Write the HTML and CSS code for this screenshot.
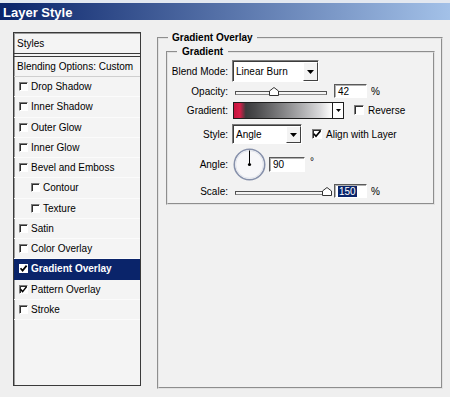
FILE: index.html
```html
<!DOCTYPE html>
<html>
<head>
<meta charset="utf-8">
<title>Layer Style</title>
<link rel="stylesheet" href="styles.css">
</head>
<body>
<div class="window">
  <div class="titlebar">Layer Style</div>
  <div class="main">
    <div class="stylelist">
      <div class="row head">Styles</div>
      <div class="row blend">Blending Options: Custom</div>
      <div class="row"><span class="cb"></span>Drop Shadow</div>
      <div class="row"><span class="cb"></span>Inner Shadow</div>
      <div class="row"><span class="cb"></span>Outer Glow</div>
      <div class="row"><span class="cb"></span>Inner Glow</div>
      <div class="row"><span class="cb"></span>Bevel and Emboss</div>
      <div class="row sub"><span class="cb"></span>Contour</div>
      <div class="row sub"><span class="cb"></span>Texture</div>
      <div class="row"><span class="cb"></span>Satin</div>
      <div class="row"><span class="cb"></span>Color Overlay</div>
      <div class="row sel"><span class="cb on"><svg viewBox="0 0 9 9" width="9" height="9"><path d="M1.5 4.2 L3.6 6.6 L7.6 1.6" fill="none" stroke="#000" stroke-width="1.7"/></svg></span>Gradient Overlay</div>
      <div class="row"><span class="cb on"><svg viewBox="0 0 9 9" width="9" height="9"><path d="M1.5 4.2 L3.6 6.6 L7.6 1.6" fill="none" stroke="#000" stroke-width="1.5"/></svg></span>Pattern Overlay</div>
      <div class="row"><span class="cb"></span>Stroke</div>
    </div>

    <fieldset class="group outer">
      <legend>Gradient Overlay</legend>
      <fieldset class="group inner">
        <legend>Gradient</legend>
        <div class="form">
          <div class="lbl">Blend Mode:</div>
          <div class="ctl">
            <div class="select blendsel"><span class="val">Linear Burn</span><span class="btn"><svg width="7" height="4" viewBox="0 0 7 4"><path d="M0 0 H7 L3.5 4 Z" fill="#000"/></svg></span></div>
          </div>

          <div class="lbl">Opacity:</div>
          <div class="ctl">
            <div class="slider"><div class="track"></div><svg class="thumb" style="left:42%" width="10" height="9" viewBox="0 0 10 9"><path d="M0.5 8.5 V4 L5 0.5 L9.5 4 V8.5 Z" fill="#fff" stroke="#333"/></svg></div>
            <div class="num">42</div>
            <span class="unit">%</span>
          </div>

          <div class="lbl">Gradient:</div>
          <div class="ctl">
            <div class="gradbox"><div class="swatch"></div><div class="gbtn"><svg width="5" height="3" viewBox="0 0 5 3"><path d="M0 0 H5 L2.5 3 Z" fill="#000"/></svg></div></div>
            <span class="cb r"></span><span class="cbl">Reverse</span>
          </div>

          <div class="lbl">Style:</div>
          <div class="ctl">
            <div class="select stylesel"><span class="val">Angle</span><span class="btn"><svg width="7" height="4" viewBox="0 0 7 4"><path d="M0 0 H7 L3.5 4 Z" fill="#000"/></svg></span></div>
            <span class="cb r on"><svg viewBox="0 0 10 10" width="10" height="10"><path d="M1.8 4.8 L4 7.2 L8.4 2" fill="none" stroke="#000" stroke-width="1.7"/></svg></span><span class="cbl">Align with Layer</span>
          </div>

          <div class="lbl">Angle:</div>
          <div class="ctl">
            <svg class="dial" width="33" height="33" viewBox="0 0 33 33">
              <circle cx="16.5" cy="16.5" r="15.2" fill="#f7f7f9" stroke="#8791ab" stroke-width="1.6"/>
              <circle cx="16.5" cy="16.5" r="13.8" fill="none" stroke="#e2e5ec" stroke-width="1"/>
              <line x1="16.5" y1="16.5" x2="16.5" y2="2.5" stroke="#000" stroke-width="1"/>
              <circle cx="16.5" cy="16.5" r="1.6" fill="#000"/>
            </svg>
            <div class="num angle">90</div>
            <span class="deg">°</span>
          </div>

          <div class="lbl">Scale:</div>
          <div class="ctl">
            <div class="slider"><div class="track"></div><svg class="thumb" style="left:100%" width="10" height="9" viewBox="0 0 10 9"><path d="M0.5 8.5 V4 L5 0.5 L9.5 4 V8.5 Z" fill="#fff" stroke="#333"/></svg></div>
            <div class="num"><span class="hl">150</span></div>
            <span class="unit">%</span>
          </div>
        </div>
      </fieldset>
    </fieldset>
  </div>
</div>
</body>
</html>
```

FILE: styles.css
```css
html, body {
  margin: 0;
  padding: 0;
}
body {
  width: 450px;
  height: 397px;
  overflow: hidden;
  background: #efefef;
  font-family: "Liberation Sans", Arial, sans-serif;
  font-size: 10px;
  color: #000;
}
.window {
  border-top: 3px solid #e3e8f0;
  height: 394px;
}
.titlebar {
  height: 16px;
  padding: 1px 0 0 3px;
  line-height: 17px;
  font-size: 13px;
  font-weight: bold;
  color: #fff;
  background: linear-gradient(to right, #0a246a, #a3c1e8);
}
.main {
  display: flex;
  align-items: flex-start;
  gap: 16px;
  padding: 11px 0 0 13px;
}

/* left style list */
.stylelist {
  width: 128px;
  height: 354px;
  margin-top: 1px;
  box-sizing: border-box;
  border: 1px solid #3a3a3a;
  box-shadow: inset 1px 1px 0 #9a9a9a;
  background: #f4f4f4;
  flex: none;
}
.row {
  height: 20.25px;
  box-sizing: border-box;
  display: flex;
  align-items: center;
  padding-left: 5px;
  border-bottom: 1px solid #fbfbfb;
  white-space: nowrap;
}
.row.head {
  height: 21px;
  padding-left: 3px;
  border-bottom: 1px solid #3a3a3a;
}
.row.blend {
  height: 21px;
  margin-top: 2px;
  padding-left: 3px;
  border-top: 1px solid #3a3a3a;
  border-bottom: 1px solid #cfcfcf;
}
.row.sub {
  padding-left: 17px;
}
.row.sel {
  background: #0a246a;
  color: #fff;
  font-weight: bold;
  border-bottom-color: #0a246a;
}
.cb {
  display: inline-block;
  width: 9px;
  height: 9px;
  box-sizing: border-box;
  margin-right: 3px;
  background: #fff;
  border-style: solid;
  border-width: 1px;
  border-color: #7c7c7c #ffffff #ffffff #7c7c7c;
  box-shadow: inset 1px 1px 0 #2e2e2e;
  position: relative;
  flex: none;
}
.cb svg {
  position: absolute;
  left: -1px;
  top: -1px;
}
.row.sel .cb {
  border-color: #fff;
  box-shadow: none;
}

/* right group boxes */
.group {
  margin: 0;
  border: 2px groove #e2e2e2;
  min-width: 0;
}
.group legend {
  font-weight: bold;
  line-height: 14px;
}
.outer {
  width: 286px;
  height: 358px;
  box-sizing: border-box;
  padding: 0 6px 0 7px;
  background: #f1f1f1;
}
.outer > legend {
  margin-left: 2px;
  padding: 0 4px;
}
.inner {
  padding: 0 0 1px 0;
  background: #f2f2f2;
}
.inner > legend {
  margin-left: 9px;
  padding: 0 5px;
}
.form {
  margin-top: 1px;
  display: grid;
  grid-template-columns: 60px 1fr;
  grid-template-rows: 22px 18px 20px 28px 32px 22px;
  column-gap: 4px;
}
.lbl {
  text-align: right;
  align-self: center;
  white-space: nowrap;
}
.ctl {
  display: flex;
  align-items: center;
  white-space: nowrap;
}

/* combo */
.select {
  display: flex;
  box-sizing: border-box;
  background: #fff;
  border: 1px solid;
  border-color: #7a7a7a #ffffff #ffffff #7a7a7a;
  box-shadow: inset 1px 1px 0 #3c3c3c;
  padding: 1px 0 0 1px;
}
.blendsel {
  width: 87px;
  height: 22px;
}
.stylesel {
  width: 70px;
  height: 20px;
}
.select .val {
  flex: 1;
  display: flex;
  align-items: center;
  padding-left: 2px;
}
.select .btn {
  width: 15px;
  box-sizing: border-box;
  display: flex;
  align-items: center;
  justify-content: center;
  background: #f3f3f3;
  border: 1px solid;
  border-color: #ffffff #404040 #404040 #ffffff;
}

/* slider */
.slider {
  position: relative;
  width: 92px;
  height: 9px;
  margin-left: 3px;
  flex: none;
}
.track {
  position: absolute;
  left: 0;
  right: 0;
  bottom: 1px;
  height: 4px;
  box-sizing: border-box;
  border: 1px solid #505050;
  border-bottom-color: #8a8a8a;
  background: #f4f4f4;
}
.thumb {
  position: absolute;
  bottom: 0;
  transform: translateX(-50%);
}

/* number fields */
.num {
  width: 33px;
  height: 14px;
  box-sizing: border-box;
  margin-left: 7px;
  padding: 1px 0 0 3px;
  line-height: 12px;
  background: #fff;
  border: 1px solid;
  border-color: #5a5a5a #ffffff #ffffff #5a5a5a;
  box-shadow: inset 1px 1px 0 #b0b0b0;
  flex: none;
}
.num.angle {
  width: 36px;
  height: 15px;
  margin-left: 3px;
}
.hl {
  background: #0a246a;
  color: #fff;
  padding: 0 1px;
}
.unit {
  margin-left: 4px;
}
.deg {
  margin-left: 5px;
  align-self: flex-start;
  margin-top: 8px;
}
.dial {
  margin-left: 1px;
  flex: none;
}

/* gradient swatch */
.gradbox {
  display: flex;
  height: 17px;
  box-sizing: border-box;
  margin-left: 1px;
  border: 1px solid #1e1e1e;
  background: #fff;
}
.swatch {
  width: 98px;
  background: linear-gradient(to right, #c4143e 0%, #d81e48 6%, #3a3a3c 12%, #4a4a4c 22%, #6a6a6c 38%, #8e8e90 55%, #b4b4b6 72%, #dadadc 88%, #ffffff 100%);
}
.gbtn {
  width: 10px;
  border-left: 1px solid #1e1e1e;
  display: flex;
  align-items: center;
  justify-content: center;
  background: #fff;
}
.cb.r {
  width: 10px;
  height: 10px;
  margin: 0 4px 0 10px;
}
```
